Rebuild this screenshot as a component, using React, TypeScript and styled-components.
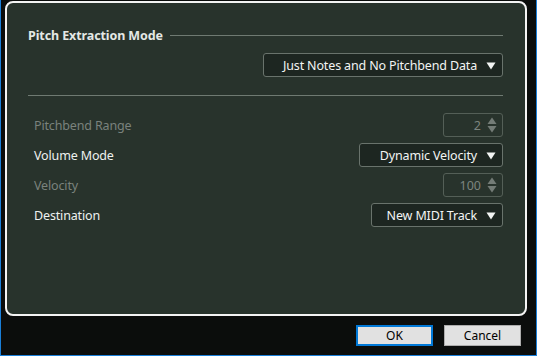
import * as React from "react";
import styled, { createGlobalStyle } from "styled-components";

const GlobalStyle = createGlobalStyle`
  html, body {
    margin: 0;
    padding: 0;
    background: #0b0d0c;
  }
  * { box-sizing: border-box; }
`;

const Window = styled.div`
  width: 537px;
  height: 356px;
  display: flex;
  flex-direction: column;
  background: #0b0d0c;
  border: 1px solid #1a7fd9;
  border-top: none;
  font-family: "Noto Sans", "Open Sans", sans-serif;
`;

const Panel = styled.section`
  margin: 1px 9px 0 4px;
  height: 315px;
  border: 2px solid #f4f4f4;
  border-radius: 8px;
  background: #28332c;
  padding: 24px 22px 0 21px;
  display: flex;
  flex-direction: column;
`;

const HeadingRow = styled.div`
  display: flex;
  align-items: center;
  height: 16px;
  gap: 7px;
`;

const Heading = styled.span`
  font-size: 12.5px;
  font-weight: bold;
  letter-spacing: -0.1px;
  color: #e4e8e5;
  white-space: nowrap;
`;

const Rule = styled.div`
  flex: 1;
  height: 1px;
  background: #6f7a72;
`;

const Separator = styled.hr`
  margin: 18px 0 0;
  border: none;
  height: 1px;
  background: #6f7a72;
`;

const RightAlign = styled.div<{ $top: number }>`
  display: flex;
  justify-content: flex-end;
  margin-top: ${(p) => p.$top}px;
`;

const Dropdown = styled.div<{ $width: number }>`
  width: ${(p) => p.$width}px;
  height: 24px;
  border: 1px solid #69736c;
  border-radius: 3px;
  background: #1d2621;
  color: #f2f4f3;
  font-size: 12.5px;
  letter-spacing: -0.15px;
  display: flex;
  align-items: center;
  justify-content: flex-end;
  gap: 9px;
  padding-right: 6px;
  white-space: nowrap;
`;

const Spin = styled.div`
  width: 60px;
  height: 24px;
  border: 1px solid #545f57;
  border-radius: 3px;
  color: #7c847f;
  font-size: 12.5px;
  display: flex;
  align-items: center;
  justify-content: flex-end;
  gap: 6px;
  padding-right: 5px;
`;

const Rows = styled.div`
  display: flex;
  flex-direction: column;
  gap: 6px;
  margin-top: 17px;
`;

const Row = styled.div`
  display: flex;
  align-items: center;
  justify-content: space-between;
  height: 24px;
  padding-left: 6px;
`;

const Label = styled.span<{ $disabled?: boolean }>`
  font-size: 12.5px;
  letter-spacing: -0.15px;
  color: ${(p) => (p.$disabled ? "#7a827d" : "#eef1ef")};
`;

const Footer = styled.footer`
  flex: 1;
  display: flex;
  justify-content: flex-end;
  align-items: flex-start;
  gap: 11px;
  padding: 9px 15px 0 0;
`;

const Button = styled.button<{ $default?: boolean }>`
  width: 77px;
  height: 21px;
  padding: 0;
  background: #e1e1e1;
  border: ${(p) => (p.$default ? "2px solid #0078d7" : "1px solid #adadad")};
  color: #000;
  font-family: "Noto Sans", "Open Sans", sans-serif;
  font-size: 12px;
  line-height: 1;
`;

const Caret = () => (
  <svg width="10" height="9" viewBox="0 0 10 9">
    <path d="M0.5 1.5 H9.5 L5 8.5 Z" fill="#f2f4f3" />
  </svg>
);

const Arrows = () => (
  <svg width="10" height="16" viewBox="0 0 10 16">
    <path d="M5 0.5 L9.5 7 H0.5 Z" fill="#737b76" />
    <path d="M0.5 9 H9.5 L5 15.5 Z" fill="#737b76" />
  </svg>
);

const Select = ({ value, width }: { value: string; width: number }) => (
  <Dropdown $width={width}>
    {value}
    <Caret />
  </Dropdown>
);

const NumberBox = ({ value }: { value: string }) => (
  <Spin>
    {value}
    <Arrows />
  </Spin>
);

export default function App() {
  return (
    <>
      <GlobalStyle />
      <Window>
        <Panel>
          <HeadingRow>
            <Heading>Pitch Extraction Mode</Heading>
            <Rule />
          </HeadingRow>
          <RightAlign $top={10}>
            <Select value="Just Notes and No Pitchbend Data" width={240} />
          </RightAlign>
          <Separator />
          <Rows>
            <Row>
              <Label $disabled>Pitchbend Range</Label>
              <NumberBox value="2" />
            </Row>
            <Row>
              <Label>Volume Mode</Label>
              <Select value="Dynamic Velocity" width={144} />
            </Row>
            <Row>
              <Label $disabled>Velocity</Label>
              <NumberBox value="100" />
            </Row>
            <Row>
              <Label>Destination</Label>
              <Select value="New MIDI Track" width={132} />
            </Row>
          </Rows>
        </Panel>
        <Footer>
          <Button $default>OK</Button>
          <Button>Cancel</Button>
        </Footer>
      </Window>
    </>
  );
}
